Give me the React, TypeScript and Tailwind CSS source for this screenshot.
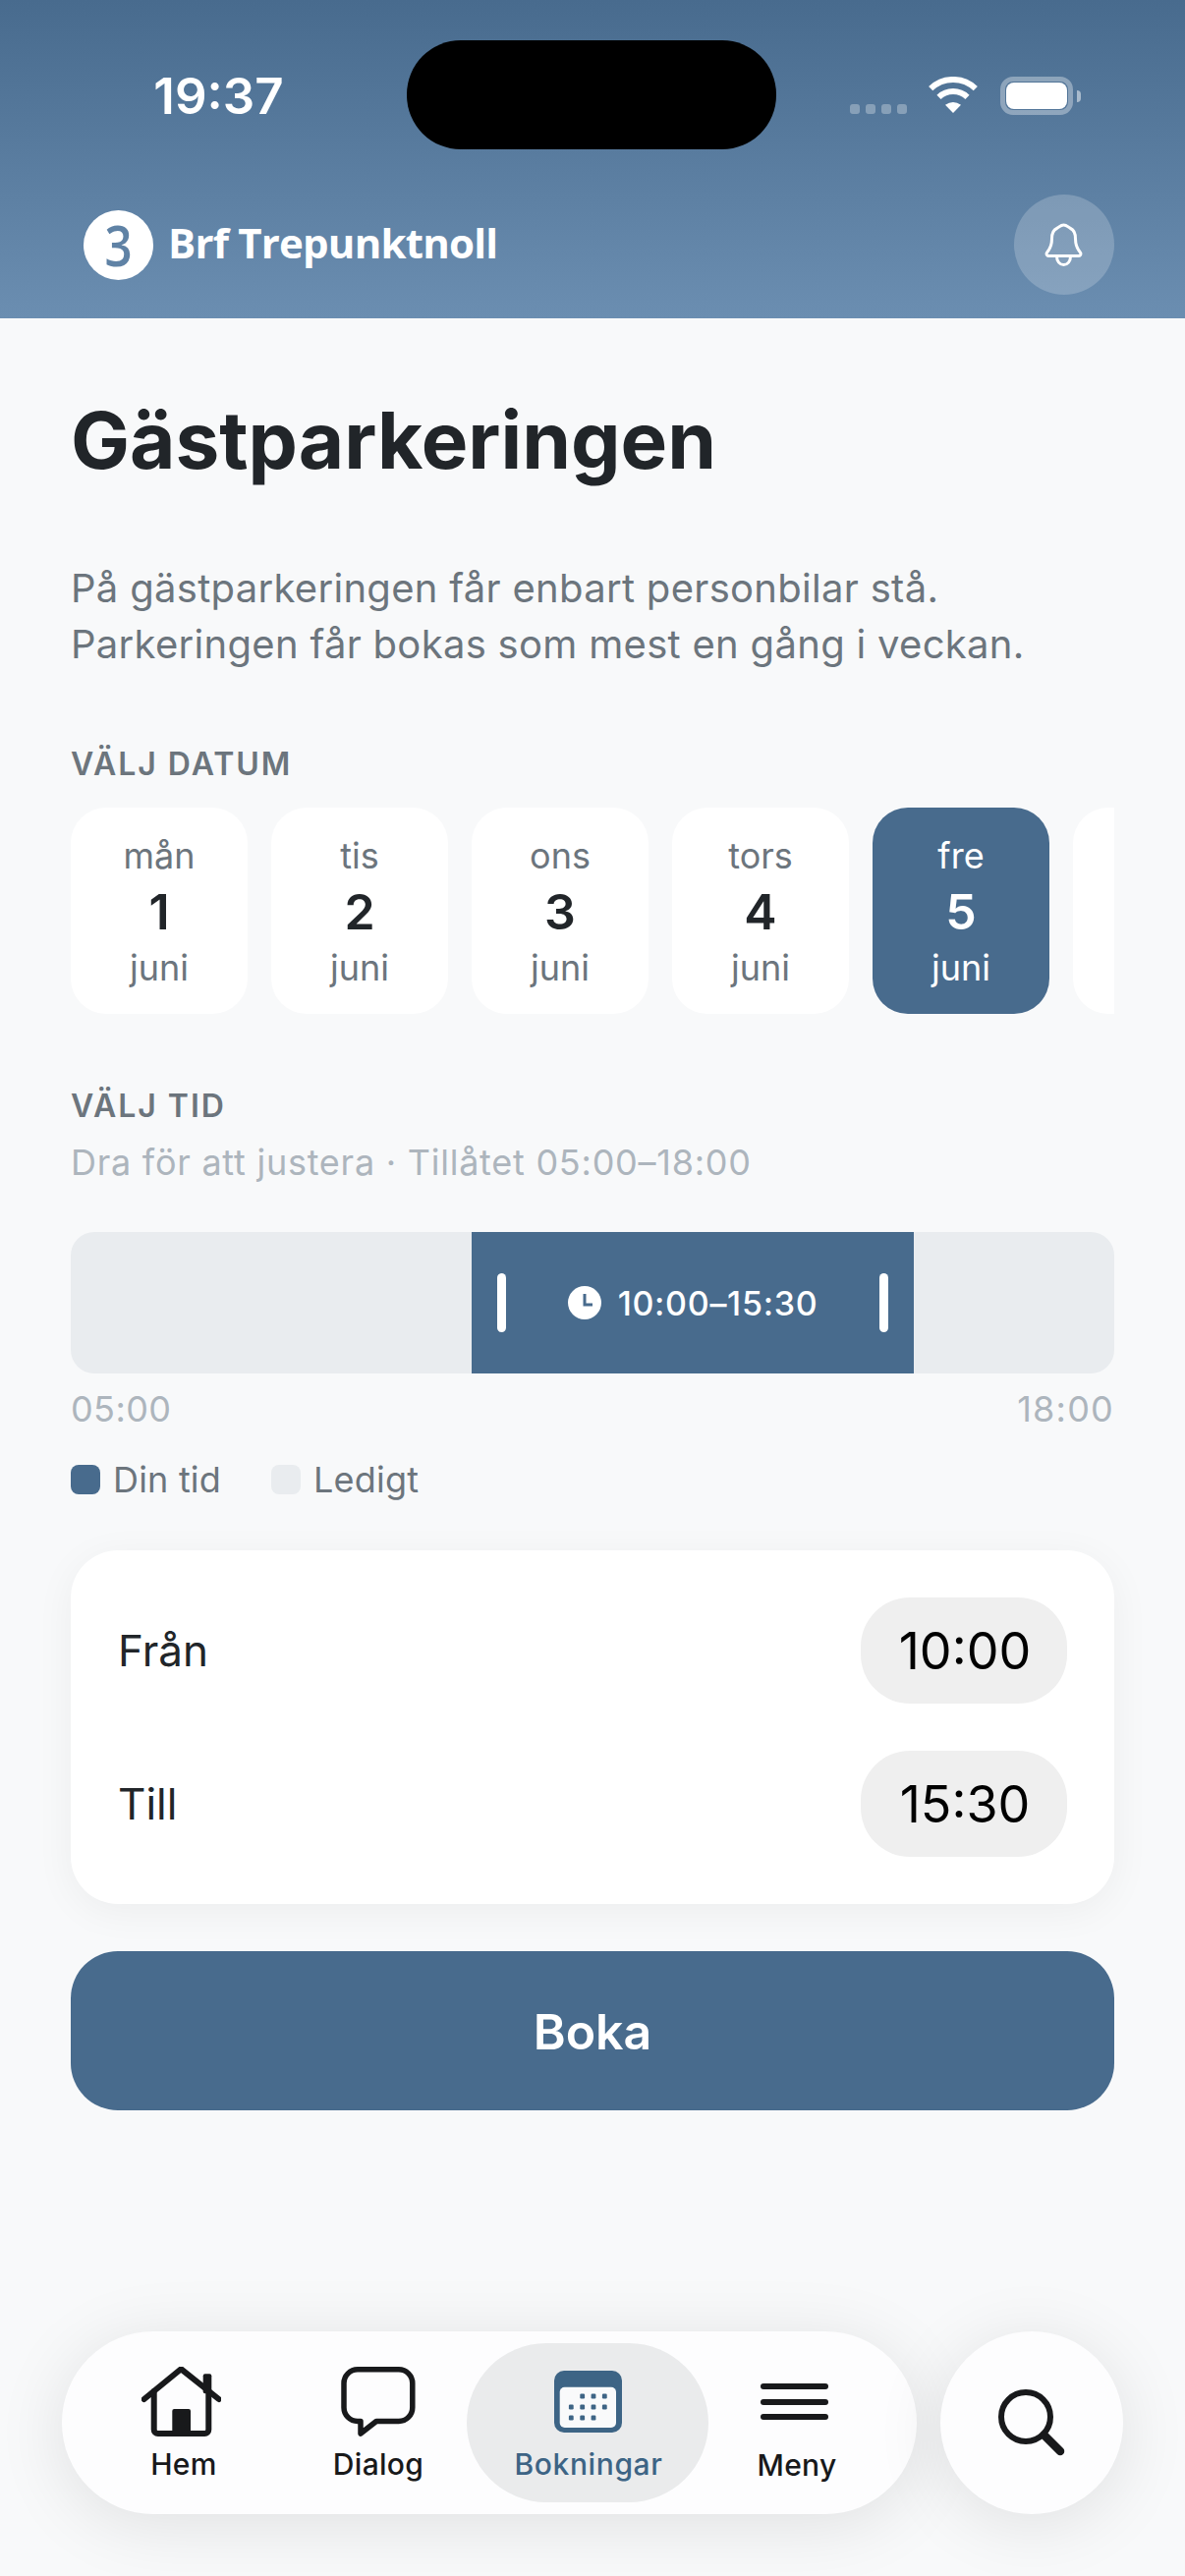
const days = [
  { name: 'mån', num: 1 },
  { name: 'tis', num: 2 },
  { name: 'ons', num: 3 },
  { name: 'tors', num: 4 },
  { name: 'fre', num: 5, active: true },
];

const WifiIcon = () => (
  <svg width="50" height="37" viewBox="0 0 50 37" fill="none">
    <path d="M2.2 12.1A33 33 0 0 1 47.8 12.1" stroke="#fff" strokeWidth="6" />
    <path d="M10.5 20.8A21 21 0 0 1 39.5 20.8" stroke="#fff" strokeWidth="6" />
    <path d="M25 37L17 28.8Q25 23 33 28.8Z" fill="#fff" />
  </svg>
);

const BellIcon = () => (
  <svg width="40" height="44" viewBox="0 0 40 44" fill="none" stroke="#fff" strokeWidth="3" strokeLinejoin="round">
    <path d="M19.5 2C23 2 24 4.5 26.5 5.5C30 7 31.5 11 31.5 16C31.5 23 33 26 36.5 30C37.5 31.5 36.5 33.5 35 33.5H4C2.5 33.5 1.5 31.5 2.5 30C6 26 7.5 23 7.5 16C7.5 11 9 7 12.5 5.5C15 4.5 16 2 19.5 2Z" />
    <path d="M12.5 34C12.5 39 15.5 42.5 19.5 42.5C23.5 42.5 26.5 39 26.5 34" />
  </svg>
);

const ClockIcon = () => (
  <svg width="34" height="34" viewBox="0 0 34 34" fill="none">
    <circle cx="17" cy="17" r="17" fill="#fff" />
    <path d="M17 8V19H25" stroke="#486b8d" strokeWidth="3" />
  </svg>
);

const HomeIcon = () => (
  <svg width="81" height="72" viewBox="0 0 81 72" fill="none" stroke="#18191b" strokeWidth="6" strokeLinecap="round" strokeLinejoin="round">
    <path d="M2.7 33L40.3 2.3L78.7 33" />
    <path d="M12.7 25V64a4 4 0 0 0 4 4H64.3a4 4 0 0 0 4-4V25" />
    <rect x="62.7" y="7.3" width="8.6" height="20" rx="2" fill="#18191b" stroke="none" />
    <path d="M31.3 45a2 2 0 0 1 2-2H48a2 2 0 0 1 2 2V68H31.3Z" fill="#18191b" stroke="none" />
  </svg>
);

const DialogIcon = () => (
  <svg width="76" height="72" viewBox="0 0 76 72" fill="none" stroke="#18191b" strokeWidth="5.5" strokeLinejoin="round">
    <path d="M17 2.8H58.8a14 14 0 0 1 14 14V41.5a14 14 0 0 1 -14 14H36L20 68V55.5H17A14 14 0 0 1 3 41.5V16.8A14 14 0 0 1 17 2.8Z" />
  </svg>
);

const CalendarIcon = () => (
  <svg width="69" height="63" viewBox="0 0 69 63">
    <rect width="69" height="63" rx="10" fill="#3d6485" />
    <rect x="5.7" y="16.7" width="57.3" height="41.3" rx="5" fill="#f9fafb" />
    {[
      [28.7, 26], [40, 26], [51.3, 26],
      [17.3, 37], [28.7, 37], [40, 37], [51.3, 37],
      [17.3, 48], [28.7, 48], [40, 48],
    ].map(([x, y]) => (
      <rect key={`${x}-${y}`} x={x - 2.4} y={y - 2.4} width="4.8" height="4.8" rx="1.2" fill="#3d6485" />
    ))}
  </svg>
);

const MenuIcon = () => (
  <svg width="69" height="40" viewBox="0 0 69 40" fill="none" stroke="#18191b" strokeWidth="6" strokeLinecap="round">
    <path d="M3 4H66" />
    <path d="M3 20H66" />
    <path d="M3 35H66" />
  </svg>
);

const SearchIcon = () => (
  <svg width="68" height="68" viewBox="0 0 68 68" fill="none" stroke="#18191b" strokeLinecap="round">
    <circle cx="28" cy="28" r="25" strokeWidth="6" />
    <path d="M46.5 46.5L63 63" strokeWidth="8.5" />
  </svg>
);

const App = () => {
  return (
    <div className="flex h-[2622px] flex-col overflow-hidden bg-[#f8f9fa] font-['Inter',sans-serif]">
      {/* Header */}
      <header className="h-[324px] shrink-0 bg-gradient-to-b from-[#486b8e] to-[#6b8eb1]">
        <div className="grid grid-cols-[414px_376px_1fr] pt-[41px]">
          <div className="flex h-[112px] items-center justify-center pl-[31px] pt-[2px] text-[51px] font-semibold text-white">
            19:37
          </div>
          <div className="h-[111px] rounded-[55px] bg-black" />
          <div className="relative flex items-start pl-[75px] pt-[37px]">
            <div className="mt-[28px] flex gap-[6px]">
              {[0, 1, 2, 3].map((i) => (
                <span key={i} className="h-[10px] w-[10px] rounded-[3px] bg-white/30" />
              ))}
            </div>
            <div className="ml-[22px]">
              <WifiIcon />
            </div>
            <div className="ml-[23px] flex items-center">
              <div className="h-[39px] w-[74px] rounded-[13px] border-[5px] border-white/35 p-[1px]">
                <div className="h-full w-full rounded-[8px] bg-white" />
              </div>
              <div className="ml-[4px] h-[12px] w-[4px] rounded-r-full bg-white/50" />
            </div>
          </div>
        </div>
        <div className="mt-[45px] flex items-center justify-between pl-[85px] pr-[72px]">
          <div className="flex items-center gap-[15px] font-['Open_Sans',sans-serif] font-bold text-white">
            <div className="flex h-[71px] w-[71px] items-center justify-center rounded-full bg-white text-[#5f82a5]">
              <span className="scale-x-[0.85] text-[58px] font-semibold leading-none">3</span>
            </div>
            <span className="pb-[4px] text-[42px] leading-none tracking-[-0.8px]">Brf Trepunktnoll</span>
          </div>
          <div className="flex h-[102px] w-[102px] items-center justify-center rounded-full bg-white/20">
            <BellIcon />
          </div>
        </div>
      </header>

      {/* Content */}
      <main className="flex flex-1 flex-col px-[72px]">
        <h1 className="mt-[76px] text-[80px] font-bold leading-[96px] text-[#212529]">Gästparkeringen</h1>
        <p className="mt-[74px] text-[40px] leading-[57px] tracking-[0.3px] text-[#6c757d]">
          På gästparkeringen får enbart personbilar stå.
          <br />
          Parkeringen får bokas som mest en gång i veckan.
        </p>

        <div className="mt-[74px] text-[32px] font-semibold leading-[40px] tracking-[2px] text-[#6c757d]">VÄLJ DATUM</div>
        <div className="mt-[24px] flex gap-[24px] overflow-hidden">
          {days.map((d) => (
            <div
              key={d.num}
              className={
                d.active
                  ? 'flex h-[210px] w-[180px] shrink-0 flex-col items-center justify-center rounded-[36px] bg-[#486b8d] text-white'
                  : 'flex h-[210px] w-[180px] shrink-0 flex-col items-center justify-center rounded-[36px] bg-white text-[#6c757d]'
              }
            >
              <span className="pt-[1px] text-[36px] leading-[56px]">{d.name}</span>
              <span className={d.active ? 'text-[50px] font-semibold leading-[58px]' : 'text-[50px] font-semibold leading-[58px] text-[#212529]'}>
                {d.num}
              </span>
              <span className="text-[36px] leading-[56px]">juni</span>
            </div>
          ))}
          {/* next day, only its edge is in view */}
          <div className="h-[210px] w-[180px] shrink-0 rounded-[36px] bg-white" />
        </div>

        <div className="mt-[74px] text-[32px] font-semibold leading-[40px] tracking-[2px] text-[#6c757d]">VÄLJ TID</div>
        <div className="mt-[15px] text-[36px] leading-[44px] tracking-[0.75px] text-[#adb5bd]">Dra för att justera · Tillåtet 05:00–18:00</div>

        <div className="relative mt-[49px] h-[144px] shrink-0 overflow-hidden rounded-[24px] bg-[#e9ecef]">
          <div className="absolute bottom-0 left-[408px] top-0 flex w-[450px] items-center justify-between bg-[#486b8d] px-[26px]">
            <span className="h-[60px] w-[9px] rounded-full bg-white" />
            <div className="flex items-center gap-[17px] text-[34px] font-medium tracking-[0.7px] text-white">
              <ClockIcon />
              <span>10:00–15:30</span>
            </div>
            <span className="h-[60px] w-[9px] rounded-full bg-white" />
          </div>
        </div>

        <div className="mt-[16px] flex justify-between text-[36px] leading-[40px] text-[#adb5bd]">
          <span className="tracking-[0.4px]">05:00</span>
          <span className="tracking-[1.2px]">18:00</span>
        </div>

        <div className="mt-[32px] flex items-center text-[36px] leading-[40px] tracking-[0.2px] text-[#6c757d]">
          <span className="h-[30px] w-[30px] rounded-[8px] bg-[#486b8d]" />
          <span className="ml-[13px] w-[161px]">Din tid</span>
          <span className="h-[30px] w-[30px] rounded-[8px] bg-[#e9ecef]" />
          <span className="ml-[13px]">Ledigt</span>
        </div>

        <div className="mt-[52px] flex flex-col gap-[48px] rounded-[48px] bg-white p-[48px] shadow-[0_8px_40px_rgba(0,0,0,0.05)]">
          {[
            ['Från', '10:00'],
            ['Till', '15:30'],
          ].map(([label, time]) => (
            <div key={label} className="flex items-center justify-between">
              <span className="text-[44px] text-[#212529]">{label}</span>
              <span className="flex h-[108px] w-[210px] items-center justify-center rounded-[50px] bg-[#efefef] pl-[2px] pt-[2px] text-[52px] text-black">
                {time}
              </span>
            </div>
          ))}
        </div>

        <button className="mt-[48px] h-[162px] shrink-0 rounded-[48px] bg-[#486b8d] pt-[2px] text-[50px] font-semibold text-white">Boka</button>
      </main>

      {/* Bottom nav */}
      <nav className="flex shrink-0 gap-[24px] pb-[63px] pl-[63px]">
        <div className="flex h-[186px] w-[870px] items-center rounded-[93px] bg-[#fdfdfe] pl-[12px] shadow-[0_10px_70px_rgba(0,0,0,0.1)]">
          <div className="flex h-[162px] w-[224px] flex-col items-center pt-[24px]">
            <div className="mr-[5px]">
              <HomeIcon />
            </div>
            <span className="mt-[9px] text-[30px] font-medium leading-[36px] tracking-[0.3px] text-[#18191b]">Hem</span>
          </div>
          <div className="flex h-[162px] w-[172px] flex-col items-center pt-[24px]">
            <DialogIcon />
            <span className="mt-[9px] text-[30px] font-medium leading-[36px] tracking-[0.3px] text-[#18191b]">Dialog</span>
          </div>
          <div className="ml-[4px] flex h-[162px] w-[246px] flex-col items-center rounded-[81px] bg-[#eaebec] pt-[28px]">
            <CalendarIcon />
            <span className="mt-[14px] pl-[2px] text-[30px] font-medium leading-[36px] tracking-[0.6px] text-[#3d6485]">Bokningar</span>
          </div>
          <div className="flex h-[162px] w-[180px] flex-col items-center pt-[40px]">
            <div className="mr-[5px]">
              <MenuIcon />
            </div>
            <span className="mt-[26px] text-[30px] font-medium leading-[36px] tracking-[0.3px] text-[#18191b]">Meny</span>
          </div>
        </div>
        <div className="flex h-[186px] w-[186px] items-center justify-center rounded-full bg-[#fdfdfe] shadow-[0_10px_70px_rgba(0,0,0,0.1)]">
          <SearchIcon />
        </div>
      </nav>
    </div>
  );
};

export default App;
